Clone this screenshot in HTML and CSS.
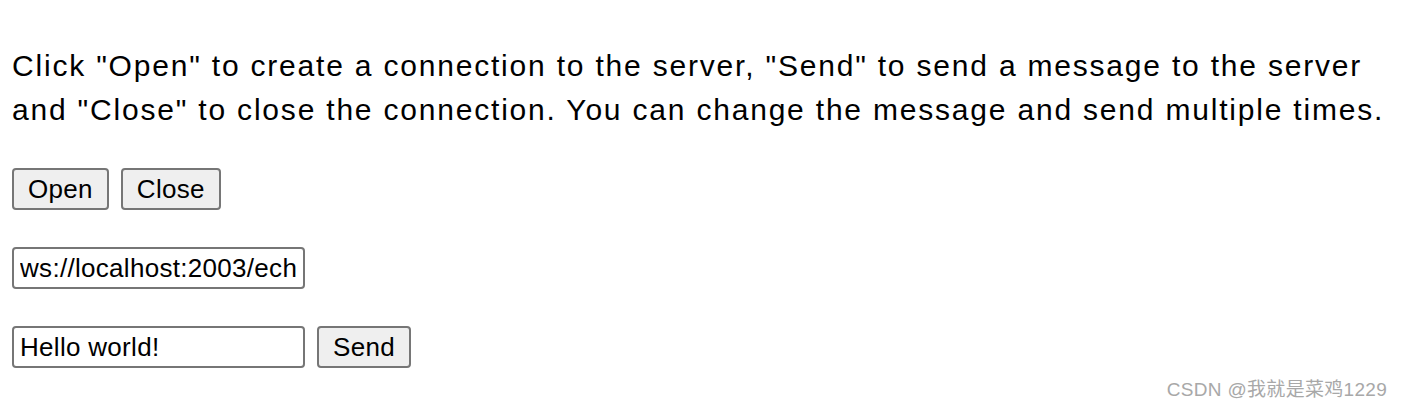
FILE: index.html
```html
<!DOCTYPE html>
<html lang="en">
<head>
    <meta charset="UTF-8">
    <title>WebSocket Echo</title>
    <link rel="stylesheet" href="styles.css">
</head>
<body>

<div class="page">
    <p class="intro">Click "Open" to create a connection to the server, "Send" to send a message to the server and "Close" to close the connection. You can change the message and send multiple times.</p>

    <div class="row">
        <button class="btn">Open</button>
        <button class="btn">Close</button>
    </div>

    <div class="row">
        <input class="field" type="text" value="ws://localhost:2003/echo">
    </div>

    <div class="row">
        <input class="field" type="text" value="Hello world!">
        <button class="btn">Send</button>
    </div>
</div>

<div class="mark">CSDN @我就是菜鸡1229</div>

</body>
</html>
```

FILE: styles.css
```css
* { margin: 0; padding: 0; box-sizing: border-box; }
html, body { width: 100%; height: 100%; }
body {
    background: #fff;
    color: #000;
    font-family: "Liberation Sans", Arial, "Noto Sans CJK SC", sans-serif;
    overflow: hidden;
    position: relative;
}
.page {
    padding: 44px 12px 0 12px;
}
.intro {
    font-size: 30px;
    line-height: 44px;
    letter-spacing: 1.8px;
    margin-bottom: 36px;
}
.row {
    display: flex;
    gap: 12px;
    margin-bottom: 37px;
}
.btn {
    font-family: inherit;
    font-size: 26px;
    letter-spacing: 0.3px;
    height: 42px;
    padding: 0 14px;
    background: #efefef;
    border: 2px solid #767676;
    border-radius: 4px;
    color: #000;
}
.field {
    font-family: inherit;
    font-size: 26px;
    letter-spacing: 0.3px;
    width: 293px;
    height: 42px;
    padding: 0 6px;
    border: 2px solid #767676;
    border-radius: 4px;
    color: #000;
}
.mark {
    position: absolute;
    right: 15px;
    bottom: 9px;
    font-size: 19px;
    letter-spacing: 0.3px;
    color: #a8a8a8;
    font-family: "Liberation Sans", "Noto Sans CJK SC", sans-serif;
}
```
